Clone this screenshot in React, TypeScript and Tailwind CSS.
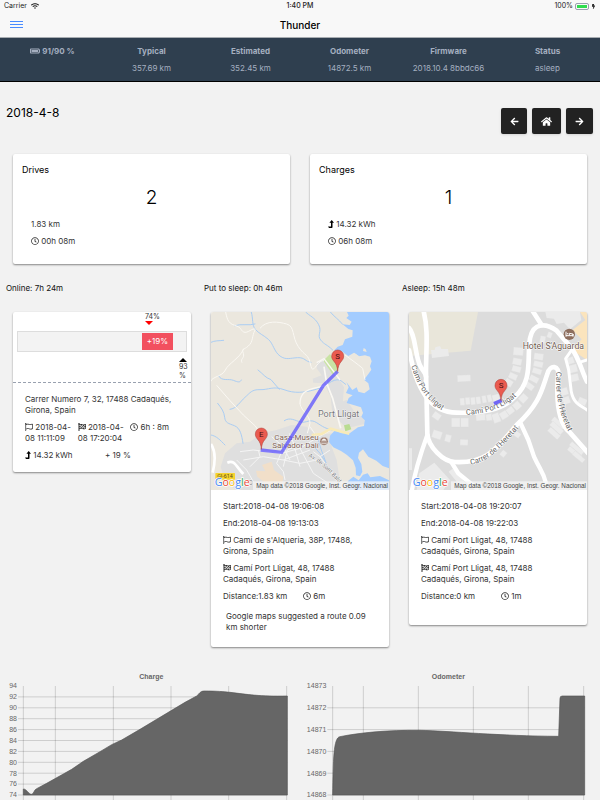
import type { ReactNode } from "react";
import {
  FaArrowLeft,
  FaArrowRight,
  FaBatteryFull,
  FaBolt,
  FaFlagCheckered,
  FaHome,
  FaRegClock,
  FaRegFlag,
  FaWifi,
} from "react-icons/fa";

const ICON = "inline-block align-[-1px]";

const stats = [
  { label: "Typical", value: "357.69 km" },
  { label: "Estimated", value: "352.45 km" },
  { label: "Odometer", value: "14872.5 km" },
  { label: "Firmware", value: "2018.10.4 8bbdc66" },
  { label: "Status", value: "asleep" },
];

function Card({ children, className = "" }: { children: ReactNode; className?: string }) {
  return (
    <div className={`mx-[10px] overflow-hidden rounded-[2px] bg-white shadow-[0_1px_2px_rgba(0,0,0,0.45)] ${className}`}>
      {children}
    </div>
  );
}

function EnergyIcon() {
  return (
    <svg width="6" height="8" viewBox="0 0 6 8" className="inline-block align-[-1px] text-black">
      <path d="M3.7 0L6 2.8H4.5V7.2Q4.5 8 3.7 8H1L0 6.6H3V2.8H1.4Z" fill="currentColor" />
    </svg>
  );
}

function StatusBar() {
  return (
    <div className="grid h-3 grid-cols-3 items-center px-1 text-[7px] leading-3 text-[#222]">
      <div className="flex items-center gap-1">
        <span>Carrier</span>
        <FaWifi size={8} />
      </div>
      <div className="text-center font-medium">1:40 PM</div>
      <div className="flex items-center justify-end gap-[2px]">
        <span>100%</span>
        <span className="flex h-[7px] w-[14px] rounded-[2px] border border-gray-400 p-px">
          <span className="w-full bg-[#2fdc4f]" />
        </span>
        <FaBolt size={5} />
      </div>
    </div>
  );
}

function Header() {
  return (
    <header className="border-b border-[#a8adb2] bg-[#f8f8f8]">
      <StatusBar />
      <div className="grid h-[25px] grid-cols-3 items-center px-[10px]">
        <button type="button" aria-label="Menu" className="flex w-[13px] flex-col gap-[2px]">
          <span className="h-px bg-[#488aff]" />
          <span className="h-px bg-[#488aff]" />
          <span className="h-px bg-[#488aff]" />
        </button>
        <h1 className="text-center text-[10px] leading-3 font-medium text-black">Thunder</h1>
      </div>
    </header>
  );
}

function Stats() {
  return (
    <div className="grid h-11 grid-cols-6 border-b border-black bg-[#2f3f4f] px-[3px] pt-2 text-center text-[8px] leading-[11px] text-[#a5afc0]">
      <div className="font-bold">
        <FaBatteryFull size={10} className="inline-block align-[-2px]" /> 91/90 %
      </div>
      {stats.map((stat) => (
        <div key={stat.label} className="flex flex-col gap-1.5">
          <b>{stat.label}</b>
          <span>{stat.value}</span>
        </div>
      ))}
    </div>
  );
}

function NavButton({ label, className, children }: { label: string; className: string; children: ReactNode }) {
  return (
    <button
      type="button"
      aria-label={label}
      className={`flex h-[26px] items-center justify-center rounded-[2px] bg-[#222] text-white shadow-sm ${className}`}
    >
      {children}
    </button>
  );
}

function Summary({ title, count, children }: { title: string; count: number; children: ReactNode }) {
  return (
    <Card className="h-[110px] px-[9px] pt-[10px]">
      <h2 className="text-[9px] leading-3 text-black">{title}</h2>
      <div className="mt-2.5 text-center text-[19px] leading-6 font-light text-black">{count}</div>
      <div className="mt-[9px] flex flex-col gap-1.5 px-[9px]">{children}</div>
    </Card>
  );
}

function ChargeBar() {
  return (
    <div className="relative h-[71px] border-b border-dashed border-gray-400 px-1 pt-[19px] text-[7px] leading-[9px]">
      <div className="absolute top-0 left-[132px]">
        <div>74%</div>
        <svg width="8" height="4" viewBox="0 0 8 4" className="block">
          <path d="M0 0H8L4 4Z" fill="#f00" />
        </svg>
      </div>
      <div className="flex h-[21px] border border-[#ddd] bg-[#f3f3f3] p-px">
        <div className="ml-[74%] flex w-[31px] items-center justify-center bg-[#f2505f] text-[8px] text-white">+19%</div>
      </div>
      <div className="absolute top-[46px] right-1 w-2">
        <svg width="8" height="4" viewBox="0 0 8 4" className="block">
          <path d="M0 4H8L4 0Z" />
        </svg>
        <div>93 %</div>
      </div>
    </div>
  );
}

function Pin({ x, y, letter }: { x: number; y: number; letter: string }) {
  return (
    <g transform={`translate(${x} ${y})`}>
      <path
        d="M0 0C-1-14-4-22-12-31C-17-37-18-41-18-46A18 18 0 0 1 18-46C18-41 17-37 12-31C4-22 1-14 0 0Z"
        fill="#ea5b50"
        stroke="#a83a33"
        strokeWidth="1.5"
      />
      <text y="-37" textAnchor="middle" fontSize="24" fill="#4a1010" fontFamily="Roboto, sans-serif">
        {letter}
      </text>
    </g>
  );
}

function Attribution({ x }: { x: number }) {
  return (
    <>
      <text
        x={x + 11}
        y="559"
        fontSize="32"
        fontWeight="500"
        fontFamily="Open Sans, sans-serif"
        stroke="#fff"
        strokeWidth="4"
        paintOrder="stroke"
      >
        <tspan fill="#4285f4">G</tspan>
        <tspan fill="#ea4335">o</tspan>
        <tspan fill="#fbbc05">o</tspan>
        <tspan fill="#4285f4">g</tspan>
        <tspan fill="#34a853">l</tspan>
        <tspan fill="#ea4335">e</tspan>
      </text>
      <rect x={x + 126} y="544" width="408" height="26" fill="#f5f5f5" fillOpacity="0.75" />
      <text x={x + 531} y="563" textAnchor="end" fontSize="19" fill="#444" fontFamily="Liberation Sans, sans-serif">
        Map data ©2018 Google, Inst. Geogr. Nacional
      </text>
    </>
  );
}

function PortMap() {
  return (
    <svg viewBox="33 36 534 534" className="block w-full" role="img" aria-label="Route to Cadaqués">
      <path fill="#ebe7de" d="M33 36H567V570H33Z" />
      {/* built-up areas */}
      <g fill="#dfdfdf">
        <path d="M62 500L75 460L110 430L150 425L185 400L230 390L275 375L320 380L350 405L400 400L395 440L410 480L420 545L430 570H110L75 545Z" />
        <path d="M352 185L370 175L412 230L432 262L425 345L398 350L392 290L372 250L340 248L338 236L365 226L350 205Z" />
        <path d="M398 315L440 300L470 345L490 350L494 372L440 385L405 350Z" />
      </g>
      <path fill="#f1dfc9" d="M186 495L215 485L222 510L250 530L246 555L200 552L172 530L168 512L196 514Z" />
      <path fill="#c9e3a4" d="M370 182L390 162L416 200L410 222L397 222Z" />
      <path fill="#b9dc92" d="M432 376L448 372L454 388L436 394Z" />
      {/* sea */}
      <g fill="#a3ccff">
        <path d="M441 36L446 47L439 54L455 65L449 75L428 73L445 87L458 91L457 110L435 118L428 135L413 140L403 151L408 158L424 153L445 168L462 158L477 169L495 166L510 170L515 184L510 199L514 209L505 222L492 239L505 250L509 268L493 280L475 275L470 262L457 270L439 246L446 262L438 279L458 286L446 294L440 309L463 316L483 322L489 339L484 350L494 361L492 378L474 382L449 400L425 400L405 391L390 407L387 426L400 442L423 453L440 464L459 481L467 503L468 526L480 529L487 515L484 492L474 474L477 458L489 448L505 470L529 482L548 498L567 505V36Z" />
        <path d="M444 543L460 530L476 541L489 524L503 520L511 532L540 528L567 541V570H437Z" />
      </g>
      <g fill="#ebe7de">
        <path d="M489 153L491 144L497 148L500 156Z" />
        <path d="M462 158L472 178L490 180L477 169Z" />
      </g>
      {/* streams */}
      <g fill="none" stroke="#aacdf3" strokeWidth="3" strokeLinecap="round">
        <path d="M154 37C160 55 155 75 166 88S190 105 205 118S222 155 240 168S270 174 293 173S315 185 333 187" />
        <path d="M104 77C125 70 145 78 165 72" />
        <path d="M33 127C45 121 55 123 71 121" />
        <path d="M56 228C65 245 85 235 100 241S120 248 124 240" />
        <path d="M90 328C110 326 120 305 135 292S155 268 180 269S220 257 252 269S310 278 345 269S395 235 420 240L437 253" />
        <path d="M174 210C190 222 195 233 213 239L238 268" />
        <path d="M53 310C65 325 72 335 74 352S85 370 103 377S125 405 129 430" />
        <path d="M33 405C50 408 60 420 75 435" />
        <path d="M317 36C328 48 345 52 356 74S350 105 362 120S380 132 398 150" />
        <path d="M391 36C402 50 415 57 428 73" />
        <path d="M253 362C270 350 285 362 302 366S330 355 350 368S375 385 397 390" />
        <path d="M355 420L364 450L378 488L360 460L338 436" />
      </g>
      {/* roads */}
      <g fill="none" stroke="#faf8f3" strokeWidth="3">
        <path d="M77 36C80 50 82 70 104 76S120 90 131 96S158 82 166 88" />
        <path d="M165 90C155 110 160 125 145 138S125 145 130 160S120 175 126 188" />
        <path d="M131 146C120 175 85 190 76 210S35 230 33 244" />
        <path d="M50 256L90 302L130 345L166 378L180 400" />
        <path d="M180 85C200 60 235 65 260 72S275 110 295 140S325 160 332 195S350 180 372 182" />
        <path d="M372 200L380 250L398 295L410 340L422 385" strokeWidth="5" />
        <path d="M350 188L372 176L420 240" strokeWidth="4" />
        <path d="M300 312C300 280 315 270 350 263L385 255" strokeWidth="4" />
        <path d="M300 312C305 335 330 345 330 370L322 400" strokeWidth="3" />
        <path d="M435 165C455 180 470 190 488 205L495 240" />
      </g>
      <g fill="none" stroke="#f4f4f4">
        <path d="M33 432C48 455 45 490 38 518" strokeWidth="8" stroke="#fff" />
        <path d="M82 488C105 478 108 500 130 522" strokeWidth="8" stroke="#fff" />
        <path
          d="M120 455L160 450L200 455L245 460L300 445L340 420L390 392M130 480L190 470L250 480L330 450M150 500L180 470L175 450M245 455L230 490L250 515L255 540M280 430L300 500M300 445L340 520L400 560M215 410L250 440L270 480M330 380L350 410M250 480L300 490L350 480M340 455L360 470L420 550M110 480L140 510L160 545M360 470L390 450M268 400L285 440L262 450L250 500"
          strokeWidth="3"
        />
      </g>
      <path d="M335 405L365 402L392 386L420 394L448 401" fill="none" stroke="#f8eab8" strokeWidth="8" />
      <g
        fill="#7b5c50"
        fontFamily="Roboto, sans-serif"
        fontSize="24"
        stroke="#fff"
        strokeWidth="2"
        paintOrder="stroke"
        strokeLinejoin="round"
      >
        <text x="356" y="419" textAnchor="end">Casa-Museu</text>
        <text x="356" y="444" textAnchor="end">Salvador Dalí</text>
        <text x="354" y="352" fill="#777" fontSize="27">Port Lligat</text>
        <path id="avenue" d="M325 470Q380 500 424 560" fill="none" stroke="none" />
        <text fill="#777" fontSize="17">
          <textPath href="#avenue">Av. de Sant Bald</textPath>
        </text>
        <text x="145" y="556" fill="#777" fontSize="20">C</text>
      </g>
      <path d="M182 450L245 457L370 257L413 214" fill="none" stroke="#5b52ff" strokeOpacity="0.75" strokeWidth="10" />
      <circle cx="372" cy="424" r="12" fill="#8d6b5d" stroke="#fff" />
      <path d="M365 421L372 416L379 421ZM366 423V430M372 423V430M378 423V430M364 431H380" stroke="#fff" strokeWidth="2" fill="#fff" />
      <rect x="46" y="519" width="59" height="20" rx="2" fill="#f6d32d" />
      <text x="75" y="534" textAnchor="middle" fontSize="16" fill="#554a18" fontFamily="Roboto, sans-serif">
        GI-614
      </text>
      <Pin x={184} y={448} letter="E" />
      <Pin x={413} y={214} letter="S" />
      <Attribution x={33} />
    </svg>
  );
}

// x, y, width, height, rotation
const houses = [
  [340, 142, 30, 24, 5], [338, 175, 27, 20, 12], [336, 198, 27, 18, 16], [326, 220, 26, 18, 24], [314, 238, 24, 20, 32],
  [402, 160, 28, 20, 8], [401, 184, 28, 17, 12], [397, 205, 28, 17, 18], [388, 228, 28, 18, 28], [376, 250, 26, 18, 36],
  [180, 294, 14, 22, -3], [196, 292, 14, 22, -4], [212, 292, 14, 22, -6], [228, 290, 14, 22, -8], [246, 287, 13, 22, -10],
  [262, 284, 13, 22, -14], [278, 283, 22, 28, -16],
  [228, 342, 28, 20, -4], [258, 342, 18, 20, -8], [278, 340, 22, 28, -20], [300, 334, 24, 22, -32], [320, 322, 22, 20, -38],
  [340, 306, 22, 22, -42], [358, 284, 24, 22, -46],
  [154, 354, 26, 27, 0], [182, 354, 24, 27, 0], [172, 225, 40, 20, -3], [180, 418, 24, 18, 2], [97, 392, 28, 24, 18],
  [135, 404, 18, 22, 15], [98, 338, 24, 20, 35], [302, 452, 16, 18, 40], [343, 396, 18, 16, 35],
  [453, 362, 44, 16, 42], [448, 376, 44, 16, 42], [442, 392, 40, 16, 42], [506, 438, 48, 14, 40], [500, 452, 48, 14, 40],
  [516, 464, 40, 14, 40], [500, 172, 22, 20, -18], [506, 194, 26, 24, -14], [512, 222, 24, 22, -14],
  [482, 264, 22, 22, -18], [488, 290, 22, 22, -20], [534, 294, 26, 20, 24], [420, 108, 16, 22, 10], [442, 96, 14, 18, 20],
];

function StreetMap() {
  return (
    <svg viewBox="27 36 534 534" className="block w-full" role="img" aria-label="Camí Port Lligat">
      <path fill="#dcdcdc" d="M27 36H561V570H27Z" />
      <path fill="#e9e6da" d="M27 36H234L212 152L27 168Z" />
      <g fill="#ebebeb">
        <path d="M93 150L104 150L106 142L120 138L124 147L144 147L147 168L96 174Z" />
        <path d="M436 36H540L544 60L510 88L492 68L470 72L462 56L440 54Z" />
        <path d="M58 520L103 488L150 540L130 570H50Z" />
        <path d="M27 445H36V510H27ZM146 515L158 506L190 540L210 570H190Z" />
        {houses.map(([x, y, w, h, angle]) => (
          <rect
            key={`${x}-${y}`}
            x={x}
            y={y}
            width={w}
            height={h}
            transform={`rotate(${angle} ${x + w / 2} ${y + h / 2})`}
            stroke="#dcdcdc"
          />
        ))}
      </g>
      <path fill="#fbe4bd" d="M540 36H561V180L516 150L545 118L518 90L556 60Z" />
      <g fill="none" stroke="#fff" strokeWidth="14" strokeLinecap="round" strokeLinejoin="round">
        <path d="M70 30C86 90 78 150 78 215L82 400C84 440 130 486 165 486C260 490 285 450 350 375C420 310 425 270 442 222C450 190 480 198 474 225C468 300 475 370 510 398L565 460" />
        <path d="M27 84C48 105 44 170 62 200C68 212 76 216 78 230" />
        <path d="M27 150C40 210 50 250 78 290C100 320 130 338 170 338C240 340 310 330 345 290C400 240 380 180 390 115C400 65 440 70 470 92L515 145C540 180 545 215 561 245" />
        <path d="M396 30L425 75" />
        <path d="M82 405C62 460 45 510 36 570M155 488L175 520L230 565M362 370L385 420L402 470C420 510 430 515 438 550" strokeWidth="13" />
        <path d="M515 150L497 176L506 210L512 260C515 310 540 315 561 330M545 185L561 180" strokeWidth="9" />
      </g>
      <g fill="#666" fontFamily="Roboto, sans-serif" fontSize="23" stroke="#fff" strokeWidth="3" paintOrder="stroke" strokeLinejoin="round">
        <path id="cami-west" d="M34 198C50 250 70 300 150 346" fill="none" stroke="none" />
        <text><textPath href="#cami-west">Camí Port Lligat</textPath></text>
        <path id="cami-east" d="M198 344C265 342 325 322 375 262" fill="none" stroke="none" />
        <text><textPath href="#cami-east">Camí Port Lligat</textPath></text>
        <path id="heretat-west" d="M212 494C275 484 315 430 375 362" fill="none" stroke="none" />
        <text><textPath href="#heretat-west">Carrer de l'Heretat</textPath></text>
        <path id="heretat-east" d="M469 215C466 290 475 340 518 420" fill="none" stroke="none" />
        <text><textPath href="#heretat-east">Carrer de l'Heretat</textPath></text>
        <text x="368" y="146" fill="#6f5a50" fontSize="26">Hotel S'Aguarda</text>
      </g>
      <path d="M282 311L305 301" stroke="#6f66f5" strokeWidth="11" />
      <circle cx="508" cy="103" r="17" fill="#8d6e5e" />
      <path d="M498 95V110M498 107H519V102L508 100V106M519 102V110" stroke="#fff" strokeWidth="3" fill="none" />
      <circle cx="503" cy="101" r="2" fill="#fff" />
      <Pin x={303} y={302} letter="S" />
      <Attribution x={27} />
    </svg>
  );
}

type Drive = {
  start: string;
  end: string;
  from: string;
  to: string;
  distance: string;
  duration: string;
  note?: string;
};

function DriveDetails({ drive }: { drive: Drive }) {
  return (
    <div className="px-3 pt-[11px] pb-[11px]">
      <div className="flex flex-col gap-1.5">
        <p>Start:{drive.start}</p>
        <p>End:{drive.end}</p>
        <p><FaRegFlag size={8} className={ICON} /> {drive.from}</p>
        <p><FaFlagCheckered size={8} className={ICON} /> {drive.to}</p>
        <div className="grid grid-cols-2 gap-1.5">
          <span>Distance:{drive.distance}</span>
          <span><FaRegClock size={8} className={ICON} /> {drive.duration}</span>
        </div>
      </div>
      <div className="px-[3px] pt-[9px] pb-[3px]">{drive.note}</div>
    </div>
  );
}

type ChartProps = {
  title: string;
  left: number;
  labels: number[];
  labelX: number;
  columns: number[];
  right: number;
  area: string;
};

function Chart({ title, left, labels, labelX, columns, right, area }: ChartProps) {
  const step = 327 / (labels.length - 1);
  return (
    <svg viewBox={`${left} 24 891 396`} className="block w-full" fontFamily="Liberation Sans, sans-serif" fontSize="21" fill="#666">
      <text x={left + 445} y="56" textAnchor="middle" fontWeight="bold">{title}</text>
      <g stroke="#000" strokeOpacity="0.15" strokeWidth="3">
        {columns.map((x) => <path key={x} d={`M${x} 78V420`} />)}
        {labels.slice(1).map((label, i) => (
          <path key={label} d={`M${labelX + 3} ${78 + (i + 1) * step}H${right}`} />
        ))}
      </g>
      {labels.map((label, i) => (
        <text key={label} x={labelX} y={85 + i * step} textAnchor="end">{label}</text>
      ))}
      <path d={area} fill="#666" />
      <path d={area} fill="none" stroke="#555" strokeWidth="2" />
    </svg>
  );
}

const drives: Drive[] = [
  {
    start: "2018-04-08 19:06:08",
    end: "2018-04-08 19:13:03",
    from: "Cami de s'Alqueria, 38P, 17488, Girona, Spain",
    to: "Camí Port Lligat, 48, 17488 Cadaqués, Girona, Spain",
    distance: "1.83 km",
    duration: "6m",
    note: "Google maps suggested a route 0.09 km shorter",
  },
  {
    start: "2018-04-08 19:20:07",
    end: "2018-04-08 19:22:03",
    from: "Camí Port Lligat, 48, 17488 Cadaqués, Girona, Spain",
    to: "Camí Port Lligat, 48, 17488 Cadaqués, Girona, Spain",
    distance: "0 km",
    duration: "1m",
  },
];

export default function App() {
  return (
    <div className="min-h-screen bg-[#f2f2f2] font-['Inter',sans-serif] text-[8px] leading-[11px] text-[#333]">
      <Header />
      <Stats />
      <main className="px-[3px]">
        <div className="flex items-start justify-between pt-[23px] pr-1 pl-[3px]">
          <h2 className="text-[12px] leading-4 text-black">2018-4-8</h2>
          <div className="mt-[3px] flex gap-[5px]">
            <NavButton label="Previous day" className="w-[26px]"><FaArrowLeft size={9} /></NavButton>
            <NavButton label="Today" className="w-[29px]"><FaHome size={11} /></NavButton>
            <NavButton label="Next day" className="w-[27px]"><FaArrowRight size={9} /></NavButton>
          </div>
        </div>

        <div className="mt-5 grid grid-cols-2">
          <Summary title="Drives" count={2}>
            <p>1.83 km</p>
            <p><FaRegClock size={8} className={ICON} /> 00h 08m</p>
          </Summary>
          <Summary title="Charges" count={1}>
            <p><EnergyIcon /> 14.32 kWh</p>
            <p><FaRegClock size={8} className={ICON} /> 06h 08m</p>
          </Summary>
        </div>

        <div className="mt-[19px] grid grid-cols-3 text-[#111]">
          <p className="px-[3px]">Online: 7h 24m</p>
          <p className="px-[3px]">Put to sleep: 0h 46m</p>
          <p className="px-[3px]">Asleep: 15h 48m</p>
        </div>

        <div className="mt-[18px] grid grid-cols-3 items-start">
          <Card>
            <ChargeBar />
            <div className="flex flex-col gap-1.5 px-3 pt-[11px] pb-[11px]">
              <p>Carrer Numero 7, 32, 17488 Cadaqués, Girona, Spain</p>
              <div className="grid grid-cols-3 gap-1">
                <span><FaRegFlag size={8} className={ICON} /> 2018-04-08 11:11:09</span>
                <span><FaFlagCheckered size={8} className={ICON} /> 2018-04-08 17:20:04</span>
                <span><FaRegClock size={8} className={ICON} /> 6h : 8m</span>
              </div>
              <div className="grid grid-cols-2 gap-1.5">
                <span><EnergyIcon /> 14.32 kWh</span>
                <span>+ 19 %</span>
              </div>
            </div>
          </Card>
          <Card>
            <PortMap />
            <DriveDetails drive={drives[0]} />
          </Card>
          <Card>
            <StreetMap />
            <DriveDetails drive={drives[1]} />
          </Card>
        </div>

        <div className="mt-[21px] grid grid-cols-2">
          <Chart
            title="Charge"
            left={9}
            labels={[94, 92, 90, 88, 86, 84, 82, 80, 78, 76, 74]}
            labelX={51}
            columns={[70, 166, 340, 513, 686, 860]}
            right={862}
            area="M70 387C78 386 86 402 94 403C101 403 102 389 110 386L140 370L190 342L215 328L250 304L300 275L335 254L365 240L420 208L470 178L555 127L590 108C600 100 600 93 612 93C650 93 670 95 690 97C740 103 780 110 862 108V405H70Z"
          />
          <Chart
            title="Odometer"
            left={0}
            labels={[14873, 14872, 14871, 14870, 14869, 14868]}
            labelX={79}
            columns={[98, 190, 355, 520, 685, 851]}
            right={854}
            area="M98 405C100 300 100 232 120 230C180 218 260 210 360 211C450 213 600 228 776 229L780 115Q780 108 787 108H854V405Z"
          />
        </div>
      </main>
    </div>
  );
}
